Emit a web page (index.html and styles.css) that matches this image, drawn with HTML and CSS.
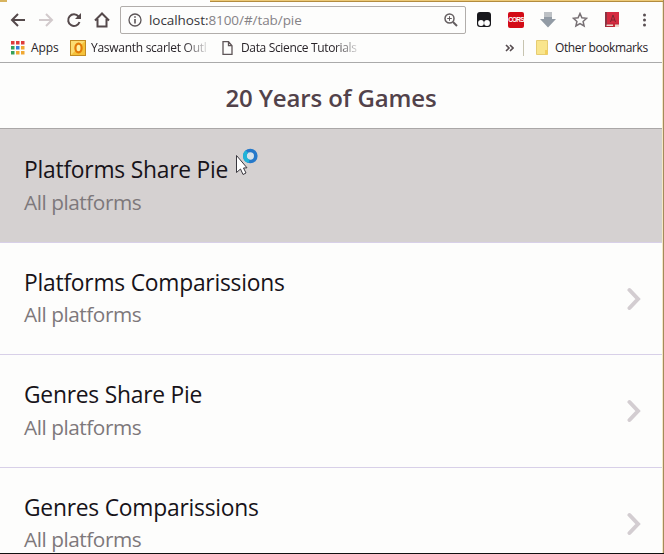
FILE: index.html
```html
<!DOCTYPE html>
<html lang="en">
<head>
<meta charset="utf-8">
<title>20 Years of Games</title>
<link rel="stylesheet" href="styles.css">
</head>
<body>
<div class="window">
  <div class="frame-top"><span class="frame-left"></span><span class="frame-right"></span></div>
  <div class="toolbar">
    <svg class="nav" viewBox="0 0 112 28" fill="none" stroke="#55494b" stroke-width="2">
      <path d="M25 14H12M18 8l-6 6 6 6"/>
      <path d="M39 14h13M46 8l6 6-6 6" stroke="#d2cacc"/>
      <path d="M78.500 10.500A5.800 5.800 0 1 0 79.500 16"/><path d="M81 7v6h-6z" fill="#55494b" stroke="none"/>
      <path d="M95 14.500l7-7 7 7M97.500 13v7.500h9V13" />
    </svg>
    <div class="address">
      <svg class="info" viewBox="0 0 14 14" fill="none" stroke="#5c5557"><circle cx="7" cy="7" r="6" stroke-width="1.300"/><path d="M7 6v4.500M7 3.300v1.500" stroke-width="1.600"/></svg>
      <span class="url">localhost:<span class="path">8100/#/tab/pie</span></span>
      <svg class="lens" viewBox="0 0 14 14" fill="none" stroke="#635d5f"><circle cx="5.500" cy="5.500" r="4.500" stroke-width="1.500"/><path d="M9 9l4 4" stroke-width="2"/><path d="M3.200 5.500h4.600M5.500 3.200v4.600"/></svg>
    </div>
    <div class="extensions">
      <svg viewBox="0 0 16 16"><rect x="1" width="14" height="15" rx="3" fill="#17171b"/><circle cx="5" cy="11" r="2.900" fill="#fff"/><circle cx="11" cy="11" r="2.900" fill="#fff"/></svg>
      <span class="cors">CORS</span>
      <svg viewBox="0 0 16 16"><path d="M4 0h8v7h4l-8 8.500L0 7h4z" fill="#929ba5"/><path d="M4 0h8v5H4z" fill="#bdc1c5"/></svg>
      <svg viewBox="0 0 16 16"><path d="M8 1.500l1.900 4.300 4.700.5-3.500 3.100 1 4.600L8 11.600 3.900 14l1-4.600-3.500-3.100 4.700-.5z" fill="#fdfdfc" stroke="#777074" stroke-width="1.500"/></svg>
      <svg viewBox="0 0 16 16"><path d="M1 0h14v12H1z" fill="#d52b40"/><path d="M1 0h2v15H1z" fill="#8c3442"/><path d="M3 12h12v3H2z" fill="#f0d6cc"/><path d="M2 14.500h7M3 12h12" stroke="#b62636"/><path d="M6.500 10L9 3l2.500 7M7.300 8h3.400" fill="none" stroke="#7f2630"/><path d="M9 12h2v3H9z" fill="#c72b37"/></svg>
      <svg viewBox="0 0 16 16" fill="#5a5053"><circle cx="8.500" cy="3" r="1.500"/><circle cx="8.500" cy="8" r="1.500"/><circle cx="8.500" cy="13" r="1.500"/></svg>
    </div>
  </div>
  <div class="bookmarks">
    <svg class="apps" viewBox="0 0 14 14"><path d="M0 0h3.500v3.500H0zM5 0h3.500v3.500H5zM10 0h3.500v3.500H10z" fill="#df3b3b"/><path d="M0 5h3.500v3.500H0z" fill="#35a058"/><path d="M5 5h3.500v3.500H5z" fill="#347edb"/><path d="M10 5h3.500v3.500H10zM5 10h3.500v3.500H5zM10 10h3.500v3.500H10z" fill="#f0a832"/><path d="M0 10h3.500v3.500H0z" fill="#35a058"/></svg>
    <span class="mark apps-label">Apps</span>
    <svg class="outlook" viewBox="0 0 16 16"><rect x=".5" y=".5" width="15" height="15" fill="#f5c23b" stroke="#c28b22"/><path d="M1 1h14L1 15z" fill="#fbdc72"/><ellipse cx="8.500" cy="8" rx="3.100" ry="4.300" fill="#fff0a8" stroke="#e27b08" stroke-width="2.200"/></svg>
    <span class="mark mail fade">Yaswanth scarlet Outl</span>
    <svg class="page" viewBox="0 0 12 14" fill="none" stroke="#5e5557" stroke-width="1.300"><path d="M1 .7h5.500l3.500 4v8.600H1zM6.500 .7v4H10"/></svg>
    <span class="mark science fade">Data Science Tutorials</span>
    <svg class="more" viewBox="0 0 9 8" fill="none" stroke="#574d50" stroke-width="1.600"><path d="M1 1l3 3-3 3M5 1l3 3-3 3"/></svg>
    <span class="divider"></span>
    <svg class="folder" viewBox="0 0 12 15"><path d="M.5.500h11v14H.5z" fill="#f9e58c" stroke="#e6cc72"/><path d="M9 10h2.500v4.500H9z" fill="#f3cf5c"/></svg>
    <span class="mark other">Other bookmarks</span>
  </div>
  <header class="title">20 Years of Games</header>
  <main class="list">
    <div class="item active"><div class="copy"><h2>Platforms Share Pie</h2><p>All platforms</p></div></div>
    <div class="item"><div class="copy"><h2>Platforms Comparissions</h2><p>All platforms</p></div><svg class="chevron" viewBox="0 0 14 24"><path d="M2.500 3l8.500 9-8.500 9"/></svg></div>
    <div class="item"><div class="copy"><h2>Genres Share Pie</h2><p>All platforms</p></div><svg class="chevron" viewBox="0 0 14 24"><path d="M2.500 3l8.500 9-8.500 9"/></svg></div>
    <div class="item"><div class="copy"><h2>Genres Comparissions</h2><p>All platforms</p></div><svg class="chevron" viewBox="0 0 14 24"><path d="M2.500 3l8.500 9-8.500 9"/></svg></div>
  </main>
</div>
<svg class="cursor" viewBox="0 0 24 28"><path d="M1.500 7.500v17l4-3.500 2.500 5.500 3-1.500-2.500-5 3.500-.2z" fill="#fff" stroke="#39373e"/><circle cx="15.300" cy="8" r="5.500" fill="#d6e2ea" stroke="#2679ca" stroke-width="3.600"/><path d="M14 13.300A5.500 5.500 0 0 1 12 3.600" fill="none" stroke="#20b4d8" stroke-width="3.600"/></svg>
</body>
</html>
```
FILE: styles.css
```css
* { box-sizing: border-box; }
body { margin: 0; width: 664px; height: 554px; overflow: hidden; background: #fdfdfc; font-family: "Open Sans", "Noto Sans", sans-serif; }
svg { display: block; flex: none; }
.window { height: 553px; overflow: hidden; border-right: 1px solid #a28b5c; box-shadow: inset -1px 0 #f5e7c4, 0 1px #111; }
.frame-top { height: 2px; display: flex; justify-content: space-between; }
.frame-left { width: 7px; background: #d8b45f; }
.frame-right { width: 453px; background: #edca78; border-bottom: 1px solid #b28b3e; }
.toolbar { height: 36px; display: flex; align-items: center; }
.nav { width: 112px; height: 28px; margin-right: 8px; }
.address { width: 346px; height: 28px; border: 1px solid #b1adaa; border-radius: 2px; display: flex; align-items: center; padding: 0 7px; white-space: nowrap; }
.info { width: 14px; height: 14px; margin-right: 7px; }
.url { font-size: 13.5px; color: #37363a; line-height: 20px; letter-spacing: -.07px; }
.path { color: #858286; }
.lens { width: 14px; height: 14px; margin-left: auto; }
.extensions { display: flex; gap: 16px; margin-left: 10px; }
.extensions svg, .cors { width: 16px; height: 16px; flex: none; }
.cors { background: #d30b16; border-radius: 2px; color: #fff; font: bold 6.5px/15px "Liberation Sans", sans-serif; letter-spacing: -.8px; text-align: center; }
.bookmarks { height: 25px; border-bottom: 1px solid #aaa; margin-right: 1px; padding: 0 14px 5px 11px; display: flex; align-items: center; white-space: nowrap; color: #292429; font-size: 12px; line-height: 18px; }
.mark { flex: none; }
.apps { width: 14px; height: 14px; margin-right: 6px; }
.apps-label { width: 39px; letter-spacing: -.1px; }
.outlook { width: 16px; height: 16px; margin-right: 5px; }
.mail { width: 116px; letter-spacing: -.28px; }
.page { width: 12px; height: 14px; margin: 0 7px 0 15px; }
.science { width: 117px; letter-spacing: -.35px; }
.fade { mask-image: linear-gradient(90deg, #000 80%, rgb(0 0 0 / .15)); }
.more { width: 9px; height: 8px; margin-left: auto; }
.divider { width: 1px; height: 16px; background: #c7c4b0; margin: 0 12px 0 9px; }
.folder { width: 12px; height: 15px; margin-right: 7px; }
.other { width: 93px; letter-spacing: -.38px; }
.title { height: 66px; border-bottom: 1px solid #aaa7a7; margin-right: 1px; padding-top: 5px; display: flex; align-items: center; justify-content: center; color: #52424a; font-size: 24px; line-height: 34px; font-weight: 600; letter-spacing: -.13px; }
.list { margin-right: 1px; }
.item { height: 112.5px; border-bottom: 1px solid #d8d0e8; padding: 24px 21px 0 24px; display: flex; justify-content: space-between; }
.item.active { background: #d5d1d1; height: 113.6px; padding-top: 25px; }
h2, p { margin: 0; font-weight: 400; white-space: nowrap; line-height: 32px; }
h2 { height: 31.5px; color: #171319; font-size: 22.8px; letter-spacing: -.22px; }
p { height: 32px; color: #7d787b; font-size: 20.8px; letter-spacing: -.46px; }
.chevron { width: 14px; height: 24px; margin-top: 20px; fill: none; stroke: #d3cdd1; stroke-width: 4; stroke-linecap: round; }
.cursor { position: absolute; left: 235px; top: 148px; width: 24px; height: 28px; }
```
